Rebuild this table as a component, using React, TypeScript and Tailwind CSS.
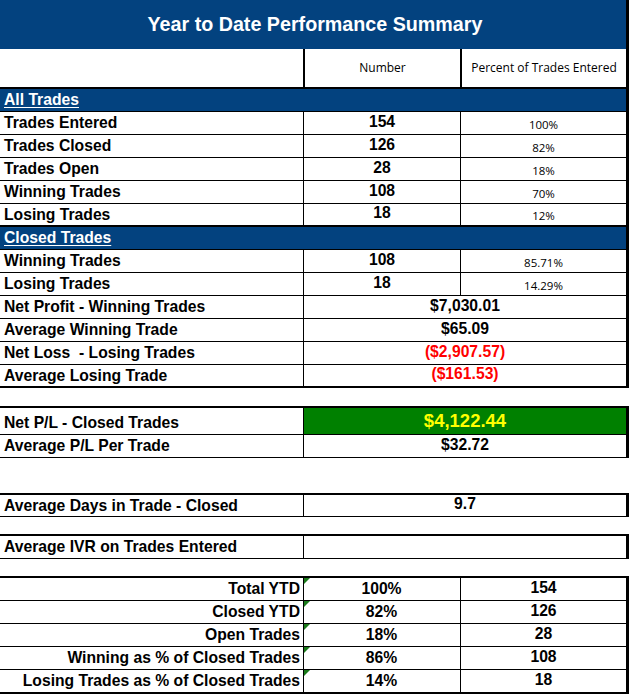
import React from "react";

const BLUE = "bg-[#03427f]";

function Row({
  label,
  num,
  pct,
  last = false,
}: {
  label: string;
  num: string;
  pct: string;
  last?: boolean;
}) {
  return (
    <div className={`flex h-[23px] border-black ${last ? "border-b-2" : "border-b"}`}>
      <div className="w-[304px] border-r border-black flex items-center pl-[4px] text-[15.7px] font-bold leading-none">
        {label}
      </div>
      <div className="w-[157px] border-r border-black flex items-center justify-center text-[15.7px] font-bold leading-none pb-[3px]">
        {num}
      </div>
      <div className="flex-1 flex items-end justify-center pb-[4px] text-[11.5px] leading-none font-['Open_Sans',sans-serif]">
        {pct}
      </div>
    </div>
  );
}

function Merged({
  label,
  value,
  red = false,
  last = false,
}: {
  label: string;
  value: string;
  red?: boolean;
  last?: boolean;
}) {
  return (
    <div className={`flex h-[23px] border-black ${last ? "border-b-2" : "border-b"}`}>
      <div className="w-[304px] border-r border-black flex items-center pl-[4px] text-[15.7px] font-bold leading-none">
        {label}
      </div>
      <div
        className={`flex-1 flex items-center justify-center text-[15.7px] font-bold leading-none pb-[3px] ${
          red ? "text-[#ff0000]" : ""
        }`}
      >
        {value}
      </div>
    </div>
  );
}

function Section({ title }: { title: string }) {
  return (
    <div className={`h-[23px] border-b border-black ${BLUE} flex items-center pl-[4px]`}>
      <span className="text-white text-[15.7px] font-bold leading-none underline decoration-1 underline-offset-[2px]">
        {title}
      </span>
    </div>
  );
}

function Tri() {
  return (
    <svg className="absolute left-0 top-0" width="6" height="6" viewBox="0 0 6 6">
      <polygon points="0,0 6,0 0,6" fill="#1a7a1a" />
    </svg>
  );
}

function BottomRow({
  label,
  pct,
  num,
  last = false,
}: {
  label: string;
  pct: string;
  num: string;
  last?: boolean;
}) {
  return (
    <div className={`flex h-[23px] border-black ${last ? "h-[24px] border-b-2" : "border-b"}`}>
      <div className="w-[304px] border-r border-black flex items-center justify-end pr-[3px] text-[15.7px] font-bold leading-none">
        {label}
      </div>
      <div className="relative w-[157px] border-r border-black flex items-center justify-center text-[15.7px] font-bold leading-none">
        <Tri />
        <span className="pr-[1px]">{pct}</span>
      </div>
      <div className="flex-1 flex items-center justify-center text-[15.7px] font-bold leading-none pb-[3px]">
        {num}
      </div>
    </div>
  );
}

export default function App() {
  return (
    <div className="w-[635px] h-[697px] bg-white text-black font-['Liberation_Sans',Arial,sans-serif] overflow-hidden">
      {/* Main table */}
      <div className="w-[629px] border-r-[3px] border-black">
        <div className={`h-[49px] ${BLUE} flex items-center justify-center`}>
          <span className="text-white text-[19.7px] font-bold leading-none pl-[4px]">
            Year to Date Performance Summary
          </span>
        </div>
        <div className="flex h-[40px] border-b-2 border-black">
          <div className="w-[305px] border-r-2 border-black" />
          <div className="w-[157px] border-r-2 border-black flex items-center justify-center font-['Open_Sans',sans-serif] text-[12px] leading-none">
            Number
          </div>
          <div className="flex-1 flex items-center justify-center font-['Open_Sans',sans-serif] text-[12px] leading-none">
            Percent of Trades Entered
          </div>
        </div>
        <Section title="All Trades" />
        <Row label="Trades Entered" num="154" pct="100%" />
        <Row label="Trades Closed" num="126" pct="82%" />
        <Row label="Trades Open" num="28" pct="18%" />
        <Row label="Winning Trades" num="108" pct="70%" />
        <Row label="Losing Trades" num="18" pct="12%" last />
        <Section title="Closed Trades" />
        <Row label="Winning Trades" num="108" pct="85.71%" />
        <Row label="Losing Trades" num="18" pct="14.29%" />
        <Merged label="Net Profit - Winning Trades" value="$7,030.01" />
        <Merged label="Average Winning Trade" value="$65.09" />
        <Merged label={"Net Loss \u00a0- Losing Trades"} value="($2,907.57)" red />
        <Merged label="Average Losing Trade" value="($161.53)" red last />
      </div>

      {/* Net P/L */}
      <div className="mt-[18px] w-[629px] border-r-[3px] border-t-2 border-black">
        <div className="flex h-[27px] border-b border-black">
          <div className="w-[304px] border-r border-black flex items-end pb-[3px] pl-[4px] text-[15.7px] font-bold leading-none">
            Net P/L - Closed Trades
          </div>
          <div className="flex-1 bg-[#008000] flex items-start justify-center pt-[4px]">
            <span className="text-[#ffff00] text-[18.5px] font-bold leading-none">$4,122.44</span>
          </div>
        </div>
        <Merged label="Average P/L Per Trade" value="$32.72" />
      </div>

      {/* Avg days */}
      <div className="mt-[35px] w-[629px] border-r-[3px] border-t-2 border-b border-black flex h-[24px]">
        <div className="w-[304px] border-r border-black flex items-center pl-[4px] text-[15.7px] font-bold leading-none">
          Average Days in Trade - Closed
        </div>
        <div className="flex-1 flex items-center justify-center text-[15.7px] font-bold leading-none pb-[4px]">
          9.7
        </div>
      </div>

      {/* Avg IVR */}
      <div className="mt-[17px] w-[629px] border-r-[3px] border-t-2 border-b border-black flex h-[25px]">
        <div className="w-[304px] border-r border-black flex items-center pl-[4px] text-[15.7px] font-bold leading-none">
          Average IVR on Trades Entered
        </div>
        <div className="flex-1" />
      </div>

      {/* Bottom table */}
      <div className="mt-[17px] w-[629px] border-r-[3px] border-t-2 border-black">
        <BottomRow label="Total YTD" pct="100%" num="154" />
        <BottomRow label="Closed YTD" pct="82%" num="126" />
        <BottomRow label="Open Trades" pct="18%" num="28" />
        <BottomRow label="Winning as % of Closed Trades" pct="86%" num="108" />
        <BottomRow label="Losing Trades as % of Closed Trades" pct="14%" num="18" last />
      </div>
    </div>
  );
}
